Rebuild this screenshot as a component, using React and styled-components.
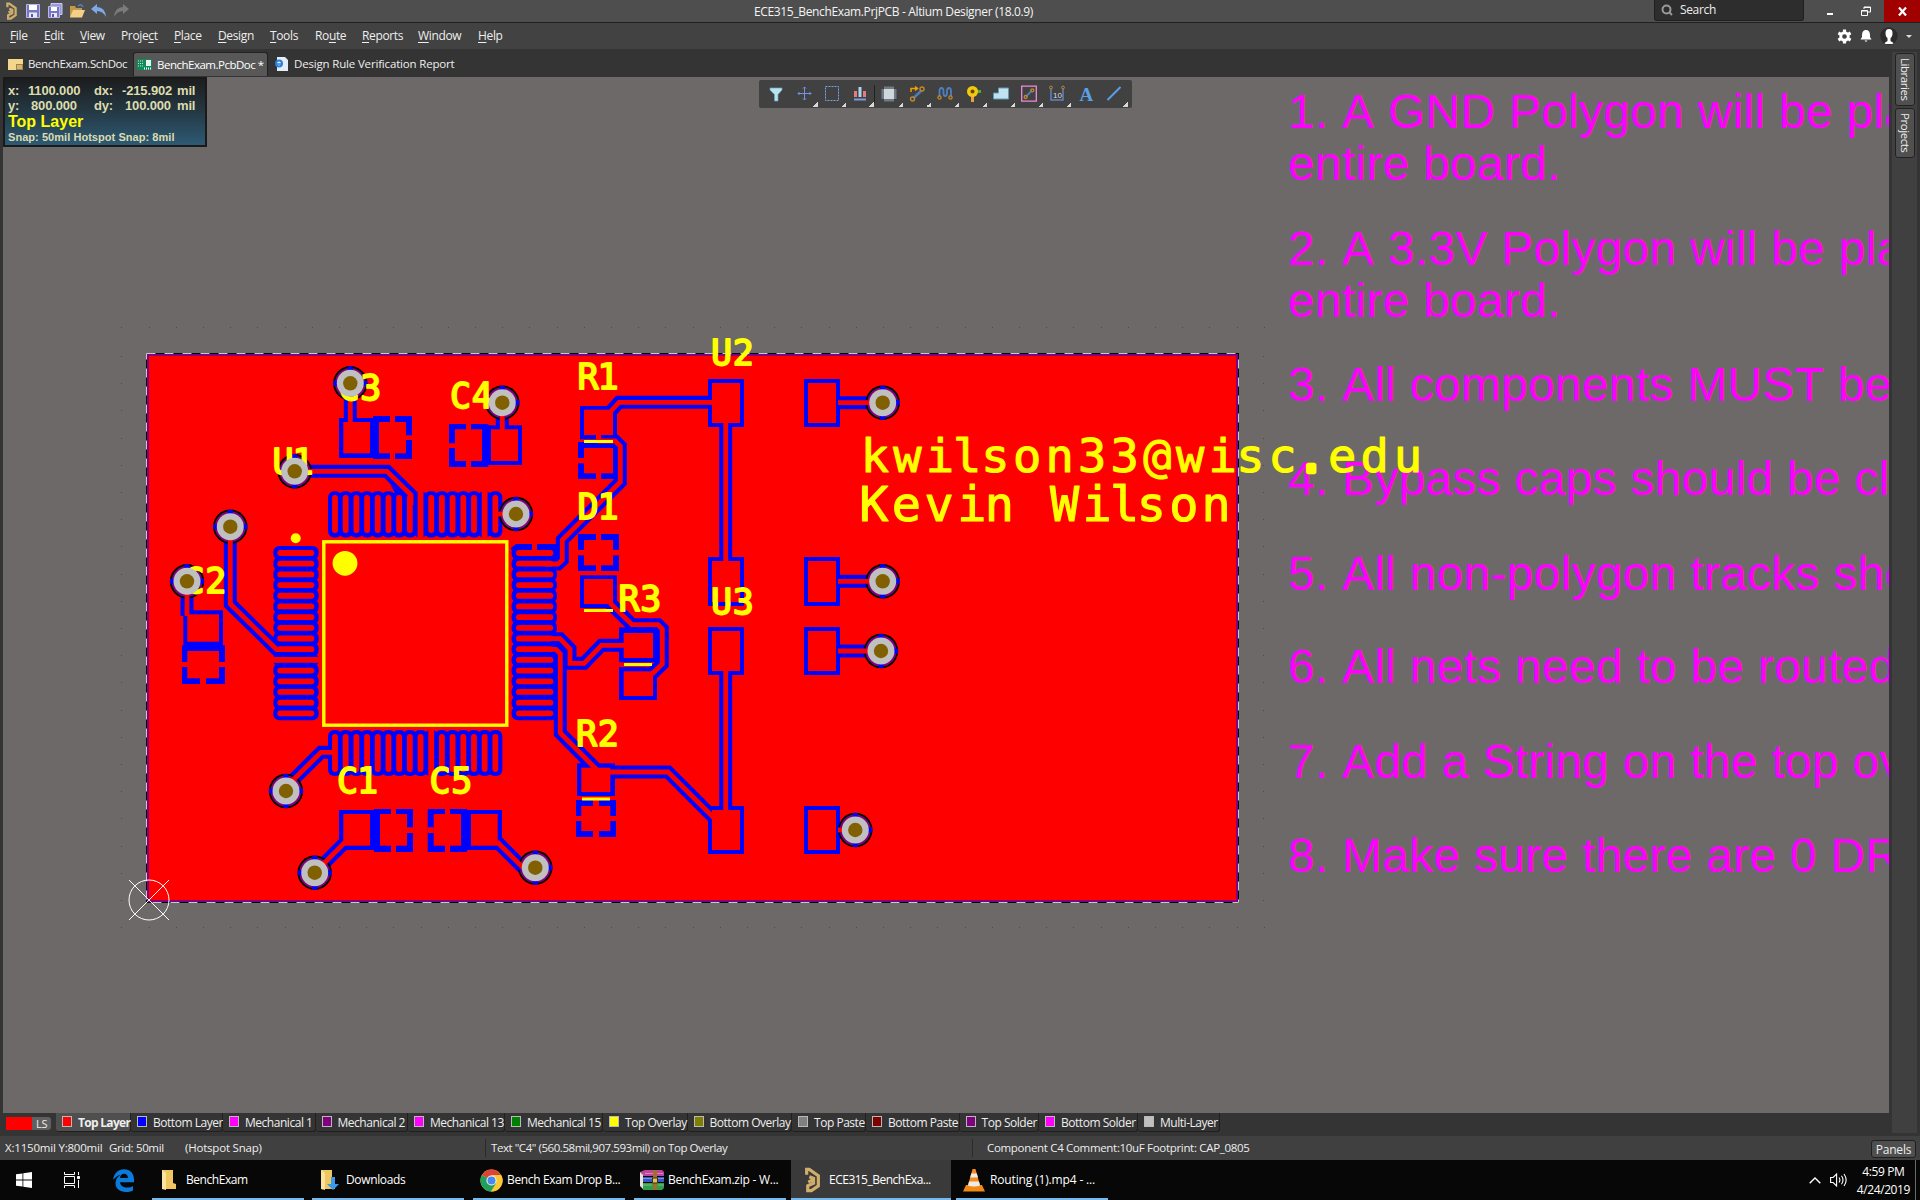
import React from "react";
import styled, { createGlobalStyle, css } from "styled-components";

const Global = createGlobalStyle`
  html, body { margin: 0; padding: 0; background: #343434; }
  * { box-sizing: border-box; }
`;

const ui = css`
  font-family: "Open Sans", "Noto Sans", sans-serif;
  font-size: 12px;
  line-height: 16px;
  letter-spacing: -0.2px;
  color: #eeeeee;
  white-space: pre;
`;

const Screen = styled.div`
  ${ui}
  width: 1920px;
  height: 1200px;
  overflow: hidden;
  display: flex;
  flex-direction: column;
  background: #343434;
`;

/* ---------- title bar ---------- */
const TitleBar = styled.header`
  display: grid;
  grid-template-columns: 754px 1fr auto;
  height: 23px;
  background: #4e4e4e;
  border-bottom: 1px solid #202020;
  flex: none;
`;
const QuickIcons = styled.div`
  display: flex;
  align-items: center;
  padding-left: 4px;
  gap: 6px;
`;
const Title = styled.div`
  padding-top: 4px;
  letter-spacing: -0.35px;
  color: #f4f4f4;
`;
const WindowControls = styled.div`
  display: flex;
  height: 22px;
`;
const SearchBox = styled.div`
  width: 150px;
  height: 21px;
  margin-right: 8px;
  padding: 0 0 0 6px;
  display: flex;
  align-items: center;
  gap: 7px;
  letter-spacing: -0.35px;
  background: #2d2d2d;
  border: 1px solid #1f1f1f;
  border-top: 0;
  border-radius: 0 0 3px 3px;
`;
const WinButton = styled.div`
  width: 36px;
  height: 22px;
  display: flex;
  align-items: center;
  justify-content: center;
  background: ${(p) => (p.$close ? "#a00000" : "transparent")};
`;

/* ---------- menu ---------- */
const MenuBar = styled.nav`
  display: flex;
  align-items: center;
  height: 26px;
  flex: none;
  padding-left: 10px;
  background: #424242;
`;
const MenuItem = styled.div`
  width: ${(p) => p.$w}px;
  letter-spacing: -0.36px;
  u { text-underline-offset: 2px; }
`;
const MenuRight = styled.div`
  margin-left: auto;
  display: flex;
  align-items: center;
  gap: 8px;
  padding-right: 8px;
`;

/* ---------- body ---------- */
const Body = styled.div`
  display: flex;
  height: 1087px;
  flex: none;
`;
const Main = styled.main`
  width: 1892px;
  display: flex;
  flex-direction: column;
`;
const DocTabs = styled.div`
  height: 28px;
  display: flex;
  align-items: flex-end;
  padding-bottom: 1px;
`;
const DocTab = styled.div`
  width: ${(p) => p.$w}px;
  height: 24px;
  display: flex;
  align-items: center;
  gap: ${(p) => p.$gap || 5}px;
  padding-left: ${(p) => p.$pl}px;
  font-size: 11.5px;
  letter-spacing: ${(p) => p.$ls || 0}px;
  border-radius: 3px 3px 0 0;
  svg { flex: none; }
  ${(p) =>
    p.$active &&
    css`
      background: #585858;
      border: 1px solid #222;
      border-bottom: 0;
      color: #fff;
    `}
`;
const Canvas = styled.section`
  position: relative;
  width: 1886px;
  height: 1036px;
  margin-left: 3px;
  background: #6d6968;
  overflow: hidden;
  > svg { display: block; }
`;
const Rail = styled.aside`
  width: 25px;
  height: 1081px;
  margin-top: 3px;
  padding: 1px 2px 0 3px;
  background: #404040;
  display: flex;
  flex-direction: column;
  gap: 2px;
`;
const RailTab = styled.div`
  height: ${(p) => p.$h}px;
  width: 20px;
  display: flex;
  align-items: center;
  justify-content: center;
  writing-mode: vertical-rl;
  font-size: 11.5px;
  letter-spacing: -0.45px;
  background: #505050;
  border: 1px solid #222;
  border-radius: 3px;
`;

/* ---------- overlays on the canvas ---------- */
const Hud = styled.div`
  position: absolute;
  left: 0;
  top: 0;
  width: 204px;
  height: 70px;
  padding: 4px 0 0 3px;
  border: 2px solid #1a1a1a;
  background: linear-gradient(#1c1d1e, #243640 45%, #2d5a75);
  font-family: "Liberation Sans", Arial, sans-serif;
  font-weight: 700;
  color: #dcdcae;
  letter-spacing: 0;
`;
const HudGrid = styled.div`
  display: grid;
  grid-template-columns: 20px 66px 28px 55px 30px;
  font-size: 13px;
  line-height: 15px;
  letter-spacing: -0.15px;
`;
const HudValue = styled.span`
  padding-left: ${(p) => p.$pl || 0}px;
`;
const HudLayer = styled.div`
  font-size: 16px;
  line-height: 17px;
  color: #ffff00;
`;
const HudSnap = styled.div`
  font-size: 11px;
  line-height: 14px;
  letter-spacing: 0.05px;
`;
const Toolbar = styled.div`
  position: absolute;
  left: 756px;
  top: 3px;
  width: 373px;
  height: 28px;
  padding-left: 3px;
  display: flex;
  background: #414141;
  border-radius: 2px;
`;
const Tool = styled.div`
  width: 28.15px;
  height: 28px;
  padding: 6px 0 0 6px;
  ${(p) =>
    p.$menu &&
    css`
      background: linear-gradient(135deg, transparent 50%, #d8d8d8 50%) no-repeat 23px 22px / 5px 5px;
    `}
  svg { display: block; overflow: visible; }
`;

/* ---------- layers and status ---------- */
const LayerBar = styled.div`
  height: 23px;
  display: flex;
  padding-left: 6px;
`;
const LayerSet = styled.div`
  display: flex;
  width: 45px;
  height: 13px;
  margin: 4px 5px 0 0;
  line-height: 13px;
  font-size: 11px;
  background: linear-gradient(90deg, #ff0000 26px, #606060 26px);
  padding-left: 30px;
  border-radius: 0 3px 3px 0;
`;
const LayerTab = styled.div`
  width: ${(p) => p.$w}px;
  height: 19px;
  padding: 1px 0 0 5px;
  display: flex;
  align-items: center;
  gap: 6px;
  border: 1px solid #1f1f1f;
  border-width: 0 1px 1px 0;
  border-radius: 0 0 3px 3px;
  letter-spacing: ${(p) => p.$ls ?? -0.47}px;
  background: ${(p) => (p.$active ? "#4f4f4f" : "#343434")};
  font-weight: ${(p) => (p.$active ? 700 : 400)};
`;
const Swatch = styled.i`
  width: 10px;
  height: 11px;
  margin: 0 0 2px 1px;
  flex: none;
  border: 1px solid #b9b9b9;
  background: ${(p) => p.$c};
`;
const StatusBar = styled.footer`
  height: 24px;
  flex: none;
  display: flex;
  align-items: center;
  padding-left: 5px;
  background: #404040;
`;
const StatusCell = styled.div`
  width: ${(p) => p.$w}px;
  height: 18px;
  line-height: 18px;
  font-size: 11.5px;
  letter-spacing: ${(p) => p.$ls ?? -0.2}px;
  padding-left: ${(p) => p.$pl || 0}px;
  border-left: ${(p) => (p.$sep ? "1px solid #2b2b2b" : "0")};
`;
const PanelsButton = styled.div`
  margin: 2px 4px 0 auto;
  width: 45px;
  height: 18px;
  line-height: 17px;
  text-align: center;
  background: #4f4f4f;
  border: 1px solid #1f1f1f;
  border-radius: 3px;
`;

/* ---------- taskbar ---------- */
const Taskbar = styled.div`
  height: 40px;
  flex: none;
  display: flex;
  background: #070707;
  color: #fff;
`;
const SysButton = styled.div`
  width: 48px;
  height: 40px;
  padding-left: ${(p) => p.$pl || 0}px;
  display: flex;
  align-items: center;
  justify-content: center;
`;
const Task = styled.div`
  width: ${(p) => p.$w || 152}px;
  height: 40px;
  margin-left: ${(p) => p.$ml || 8}px;
  padding: 2px 0 0 ${(p) => p.$pl}px;
  display: flex;
  align-items: center;
  gap: ${(p) => p.$gap}px;
  letter-spacing: ${(p) => p.$ls ?? -0.15}px;
  border-bottom: 2px solid #76b9ed;
  background: ${(p) => (p.$active ? "#3a3a3a" : "transparent")};
  svg { flex: none; }
`;
const Tray = styled.div`
  margin-left: auto;
  display: flex;
  align-items: center;
  gap: 9px;
  padding-right: 4px;
`;
const Clock = styled.div`
  text-align: center;
  line-height: 18px;
  height: 36px;
  margin: 1px -2px 0 0;
  letter-spacing: -0.4px;
`;
const ShowDesktop = styled.div`
  width: 1px;
  height: 40px;
  margin-left: -2px;
  background: #6a6a6a;
`;

/* ---------- board data ---------- */
const RED = "#ff0000";
const BLUE = "#0000ff";
const YEL = "#ffff00";
const PITCH = 10.69;

const vias = [
  [350.3, 383.3], [502.3, 402.7], [294.7, 471.3], [516, 514], [230.3, 526.7], [187, 581.3],
  [286, 791], [314.7, 872.7], [535.3, 867.7], [882.7, 402.7], [882.7, 581.3], [881, 651], [855.3, 830],
];

// x1, y1, x2, y2 of the clearance and then of the copper
const pads = [
  [339, 418, 376, 458, 343.3, 422, 370, 453.3],
  [487, 425.3, 522, 465, 491, 429.3, 518, 461],
  [183.3, 610.3, 223, 646, 187.3, 614.3, 219, 641.7],
  [339, 810, 375, 850, 343.3, 814, 370, 845.7],
  [466, 810, 502, 850, 471, 814, 497.7, 845.7],
  [580, 406, 617, 439.3, 584, 409.7, 613, 435],
  [580, 575.3, 617, 608, 584, 579, 613, 604],
  [619, 627.3, 657, 662.3, 623.7, 633, 653, 658],
  [619, 667, 657, 700, 623.7, 671.3, 653, 696],
  [577, 763.3, 615, 796, 581.3, 767.7, 610.3, 792],
];
for (const x of [708, 804]) {
  for (const [a, b] of [[379, 427], [557, 606], [627, 675], [806, 854]]) {
    pads.push([x, a, x + 36, b, x + 4, a + 4, x + 32, b - 4]);
  }
}

// relief pads: clearance, copper, then spokes cut through the clearance
const reliefs = [
  { o: [373, 416, 412, 459], i: [379, 422, 406, 453.3], g: [[390, 416, 5, 6], [390, 453, 5, 6], [406, 435.3, 6, 4.7]] },
  { o: [449, 424, 488.3, 467], i: [455, 429.3, 482, 461], g: [[466, 424, 5, 6], [466, 461, 5, 6], [449, 443.3, 6, 4.7]] },
  { o: [182, 645.3, 225, 684], i: [187.3, 651, 219, 678.3], g: [[182, 662, 6, 5], [219, 662, 6, 5], [200, 678, 6, 6]] },
  { o: [374, 809, 413, 852], i: [380, 814, 407, 845.7], g: [[391, 809, 5, 5], [391, 845, 5, 7], [407, 827.3, 6, 5.7]] },
  { o: [427.7, 809, 467, 852], i: [433.7, 814, 461, 845.7], g: [[445, 809, 5, 5], [445, 845, 5, 7], [427.5, 827.3, 6.3, 5.7]] },
  { o: [578, 442, 617, 479], i: [584, 448, 613, 473.3], g: [[578, 458, 6, 5.3], [596, 473, 5, 6]] },
  { o: [578, 534, 619, 571], i: [584, 540, 613, 565.3], g: [[596, 534, 5, 6], [596, 565, 5, 6], [578, 550, 6, 5.3], [613, 550, 6, 5.3]] },
  { o: [576, 800, 616, 837], i: [581.3, 806, 610.3, 831], g: [[593, 800, 6, 6], [593, 831, 6, 6], [576, 816, 6, 5], [610, 816, 6, 5]] },
];

const tracks = [
  "350.3,383 350.3,424",
  "502.3,402 502.3,431",
  "187,581 187,616",
  "294.7,471.3 387,471.3 411,495 411,505",
  "230.3,526.7 230.3,604 276.7,649.5 285,649.5",
  "286,791 286,787 321,752.3 336,752.3",
  "314.7,872.7 345,842.3",
  "535.3,867.7 523,867.7 497,841.7",
  "611,411 619,402.3 715,402.3",
  "598,441 615,441 620.3,446 620.3,482 562.3,540 562.3,560 558,564 545,564",
  "610,603 632,624.7 658,624.7 662.3,629 662.3,664 652,674",
  "545,638.7 560,638.7 570,649 570,663.3 584,663.3 601.5,645.3 625,645.3",
  "545,649.3 556,649.3 560.3,654 560.3,733 597,770",
  "608,772 668,772 714,818",
  "725.7,422 725.7,562",
  "725.7,670 725.7,811",
  "838,402.7 882,402.7",
  "838,581.3 882,581.3",
  "838,651 881,651",
  "838,830 855,830",
];

const rows = Array.from({ length: 16 }, (_, i) => i);

function Pins({ red }) {
  const out = [];
  const push = (key, x, y, w, h, r) =>
    out.push(<rect key={key} x={x} y={y} width={w} height={h} rx={r} fill={red ? RED : BLUE} />);
  rows.forEach((i) => {
    const cx = 335 + i * PITCH;
    const cy = 553 + i * PITCH;
    const t = i === 8 || i === 14;
    const b = i === 9;
    const l = i === 10;
    if (red) {
      push(`t${i}`, cx - 2.9, t ? 490 : 495, 5.8, t ? 48.5 : 38, t ? 0 : 2.9);
      push(`b${i}`, cx - 2.9, b ? 729 : 734, 5.8, b ? 48 : 38, b ? 0 : 2.9);
      push(`l${i}`, l ? 272 : 277.3, cy - 2.9, l ? 48.5 : 37, 5.8, l ? 0 : 2.9);
      push(`r${i}`, 516, cy - 2.9, 37.3, 5.8, 2.9);
    } else {
      push(`t${i}`, cx - 7, 491.3, 14, 46.2, 6);
      push(`b${i}`, cx - 7, 730, 14, 46, 6);
      push(`l${i}`, 273.3, cy - 7, 45.4, 14, 6);
      push(`r${i}`, 511.6, cy - 7, 45.4, 14, 6);
    }
  });
  return out;
}

const ViaRing = ({ c: [x, y] }) => (
  <g>
    <circle cx={x} cy={y} r="17.2" fill="#000" />
    <circle cx={x} cy={y} r="15.4" fill="#800080" />
    <path d={`M${x - 2.5} ${y - 17}h5v34h-5zM${x - 17} ${y - 2.5}h34v5h-34z`} fill={BLUE} />
  </g>
);
const ViaCore = ({ c: [x, y] }) => (
  <g>
    <circle cx={x} cy={y} r="13.5" fill="#c0c0c0" />
    <circle cx={x} cy={y} r="7.2" fill="#806000" />
  </g>
);

const designators = [
  ["C3", 338.5, 401], ["C4", 450, 408.7], ["U1", 272.5, 475], ["C2", 183.5, 593.7],
  ["C1", 337, 793.7], ["C5", 429.5, 793.7], ["R1", 577.5, 389.5], ["D1", 577.5, 519.5],
  ["U2", 711, 365.7], ["R3", 618.5, 611.7], ["U3", 711, 614.5], ["R2", 576, 746.5],
];

const notes = [
  ["1. A GND Polygon will be pla", 128], ["entire board.", 180],
  ["2. A 3.3V Polygon will be pla", 265], ["entire board.", 317],
  ["3. All components MUST be", 401.3], ["4. Bypass caps should be cl", 495.3],
  ["5. All non-polygon tracks sho", 589.5], ["6. All nets need to be routed", 683],
  ["7. Add a String on the top ov", 778.3], ["8. Make sure there are 0 DR", 872.3],
];

const SilkText = styled.text`
  font-family: "DejaVu Sans Mono", monospace;
  font-size: ${(p) => p.$size}px;
  letter-spacing: 0;
  fill: #ffff00;
  stroke: #ffff00;
  stroke-width: ${(p) => p.$sw}px;
  stroke-linejoin: round;
`;
const SilkDot = styled.tspan`
  stroke-width: 4.5px;
`;
const NoteText = styled.text`
  font-family: "Liberation Sans", Arial, sans-serif;
  font-size: 48px;
  font-kerning: none;
  letter-spacing: 0.25px;
  fill: #ff00ff;
`;

const glyphX = (list, shift) => list.map((v) => (840 + v / 2.613 - shift).toFixed(1)).join(" ");
const mailX = glyphX([62, 147, 232, 303, 377, 460, 545, 630, 715, 800, 886, 971, 1043, 1127, 1202, 1283, 1368, 1455], 3);
const nameX = glyphX([57, 142, 227, 313, 385, 470, 555, 640, 712, 782, 867, 951], 2.5);

function Board() {
  const dots = [];
  for (let i = -1; i <= 41; i++) {
    const x = Math.round(148.6 + i * 27.2);
    dots.push([x, 327], [x, 927]);
  }
  for (let i = 0; i <= 20; i++) {
    const y = Math.round(356 + i * 27.2);
    dots.push([121, y], [1263, y]);
  }
  return (
    <svg width="1886" height="1036" viewBox="3 77 1886 1036">
      {dots.map(([x, y], i) => (
        <rect key={i} x={x} y={y} width="1" height="1" fill="#4b4949" />
      ))}
      {notes.map(([t, y]) => (
        <NoteText key={y} x="1288" y={y}>{t}</NoteText>
      ))}
      <rect x="146.5" y="353.5" width="1092" height="549" fill="none" stroke="#000" />
      <rect x="146.5" y="353.5" width="1092" height="549" fill="none" stroke="#c9c9c9" strokeDasharray="9 9" />
      <rect x="147" y="354" width="1091" height="548" fill="#800080" />
      <rect x="149" y="356" width="1087" height="544" fill={RED} />
      <g fill={BLUE}>
        {pads.map((p, i) => <rect key={i} x={p[0]} y={p[1]} width={p[2] - p[0]} height={p[3] - p[1]} />)}
        <Pins />
        <path d="M511 548l5-4h16v6h-21zM537 544h19v6h-19z" />
        <path d="M390 484l12 11h-6z" />
      </g>
      <g fill="none" stroke={BLUE} strokeWidth="13">
        {tracks.map((t) => <polyline key={t} points={t} />)}
      </g>
      {reliefs.map((r, i) => (
        <g key={i}>
          <rect x={r.o[0]} y={r.o[1]} width={r.o[2] - r.o[0]} height={r.o[3] - r.o[1]} fill={BLUE} />
          <g fill={RED}>
            <rect x={r.i[0]} y={r.i[1]} width={r.i[2] - r.i[0]} height={r.i[3] - r.i[1]} />
            {r.g.map((g, k) => <rect key={k} x={g[0]} y={g[1]} width={g[2]} height={g[3]} />)}
          </g>
        </g>
      ))}
      {vias.map((c, i) => <ViaRing key={i} c={c} />)}
      <g fill={RED}>
        {pads.map((p, i) => <rect key={i} x={p[4]} y={p[5]} width={p[6] - p[4]} height={p[7] - p[5]} />)}
        <Pins red />
        <rect x="596" y="434" width="5" height="8" />
        <rect x="532" y="543" width="5" height="8" />
      </g>
      <g fill="none" stroke={RED} strokeWidth="4.8">
        {tracks.map((t) => <polyline key={t} points={t} />)}
        <path d="M496 514h10" />
      </g>
      <rect x="323.8" y="541.8" width="183" height="183.4" fill="none" stroke={YEL} strokeWidth="3.4" />
      <circle cx="345" cy="563.3" r="12.4" fill={YEL} />
      <circle cx="295.7" cy="538.3" r="5" fill={YEL} />
      <path d="M584 441.5h29M584 610.5h29M624 664.5h28M582 799h28" stroke={YEL} strokeWidth="3" />
      {designators.map(([t, x, y]) => (
        <SilkText key={t} $size={35} $sw={1.8} x={`${x} ${x + (t[1] === "1" ? 20 : 21.8)}`} y={y - 1}>{t}</SilkText>
      ))}
      <SilkText $size={47} $sw={1.1} x={mailX} y={471.8}>
        kwilson33@wisc<SilkDot>.</SilkDot>edu
      </SilkText>
      <SilkText $size={48.5} $sw={1.1} x={nameX} y={520.5}>Kevin Wilson</SilkText>
      {vias.map((c, i) => <ViaCore key={i} c={c} />)}
      <g fill="none" stroke="#fff" strokeWidth="1">
        <circle cx="149" cy="900" r="20" />
        <path d="M129 880l40 40M169 880l-40 40" />
      </g>
    </svg>
  );
}

/* ---------- icons ---------- */
const AltiumMark = ({ w = 12, h = 16 }) => (
  <svg width={w} height={h} viewBox="0 0 16 24" fill="none" stroke="#cfae6c" strokeWidth="3">
    <path d="M2.500 7V2h2.500l8.500 6v9.500L7 22H3.500v-4.500l5.500-2.500v-4.500L5 9" />
    <path d="M9 11.500L4 14" />
  </svg>
);
const Floppy = ({ all }) => (
  <svg width="16" height="16" viewBox="0 0 16 16">
    {all && <path d="M4 .5h11v11H4z" fill="#9a9ad8" stroke="#c9c9f0" />}
    <path d={all ? "M1.500 3.500h11v11h-11z" : "M1.500 1.500h13v13h-13z"} fill="#7676c4" stroke="#b7b7ea" />
    <path d={all ? "M4 4h6v4H4z" : "M4 2h8v5H4z"} fill="#fff" />
    <path d={all ? "M4 10h6v4H4z" : "M4 9.500h8v5H4z"} fill="#e8e8fa" />
    <path d={all ? "M5 11h2v3H5z" : "M6 11h2v3H6z"} fill="#5757a8" />
  </svg>
);
const OpenFolder = () => (
  <svg width="16" height="16" viewBox="0 0 16 16">
    <path d="M1 3h5l1 2h6v9H1z" fill="#c39a4a" />
    <path d="M4 7h12l-3 7.500H1z" fill="#f3cf87" />
    <path d="M9 3q3-3 5 1" stroke="#4f83c8" fill="none" strokeWidth="1.500" />
  </svg>
);
const Undo = ({ c, flip }) => (
  <svg width="16" height="16" viewBox="0 0 16 16">
    <g transform={flip ? "matrix(-1 0 0 1 16 0)" : undefined}>
      <path d="M0 6l6-5v3q8 0 9 10-3-6-9-6v3z" fill={c} />
    </g>
  </svg>
);

const toolIcons = [
  { s: <path d="M2 2h12v2L10 8.500V15H6.500V8.500L2 4z" fill="#b9e2ee" stroke="#6fa3b8" strokeWidth=".7" /> },
  { m: 1, s: <path d="M8.500 1v13M2 7.500h13M7 2.500l1.500-1.500 1.500 1.500M7 12.500l1.500 1.500 1.500-1.500M3.500 6l-1.500 1.500 1.500 1.500M13.500 6l1.500 1.500-1.500 1.500" stroke="#7392e6" fill="none" /> },
  { m: 1, s: <path d="M1.500.5h13v14h-13z" stroke="#7d9ff0" fill="none" strokeDasharray="2 1" /> },
  { m: 1, s: <g><path d="M2 5h3v6H2zM11 5h3v6h-3z" fill="#e87a7a" /><path d="M6.500 1h3v10h-3z" fill="#a7d8ea" /><path d="M2 12.500h12v2H2z" fill="#7f9be0" /><path d="M22.500-1v18" stroke="#222" /></g> },
  { m: 1, s: <g><path d="M.5 4h15M.5 6h15M.5 8h15M.5 10h15M.5 12h15M4 .5v15M6 .5v15M8 .5v15M10 .5v15M12 .5v15" stroke="#a9c3d2" strokeWidth=".9" /><path d="M3 3h10v10H3z" fill="#cfd8dc" /></g> },
  { m: 1, s: <g fill="none"><path d="M4.500 12L12 5" stroke="#4e7bc0" strokeWidth="2.500" /><circle cx="3.500" cy="13" r="2" stroke="#c08a2a" strokeWidth="1.400" /><circle cx="13" cy="3" r="2" stroke="#c08a2a" strokeWidth="1.400" /><path d="M2 6V2.500h6M6 .5l2.500 2L6 4.500" stroke="#f0a000" strokeWidth="1.500" /></g> },
  { m: 1, s: <g fill="none"><path d="M2.500 10V5q0-3 2-3t2 3v2q0 3 1.700 3T10 7V5q0-3 2-3t2 3v5" stroke="#4f7fc0" strokeWidth="1.800" /><circle cx="2.500" cy="11.500" r="1.600" stroke="#c08a2a" strokeWidth="1.300" /><circle cx="13.500" cy="11.500" r="1.600" stroke="#c08a2a" strokeWidth="1.300" /></g> },
  { m: 1, s: <g><path d="M9 4h7v3H9z" fill="#4fae2f" /><path d="M6 9h3v7H6z" fill="#e8a040" /><circle cx="7.500" cy="5.500" r="5.500" fill="#f2c90c" /><circle cx="7.500" cy="5.500" r="2" fill="#5c4a10" /></g> },
  { m: 1, s: <path d="M.5 7h5V2h10v11H.5z" fill="#c0e2ee" stroke="#5f9ab5" /> },
  { m: 1, s: <g fill="none"><path d="M.7.2h14.600v15H.7z" stroke="#f08ad8" strokeWidth="1.300" /><path d="M5 10.500l6-6" stroke="#4e7bc0" strokeWidth="1.800" /><circle cx="4.700" cy="11" r="1.500" stroke="#c08a2a" strokeWidth="1.300" /><circle cx="11.300" cy="4.300" r="1.500" stroke="#c08a2a" strokeWidth="1.300" /></g> },
  { m: 1, s: <g><path d="M2 3v11h12V3" stroke="#5f84c0" fill="none" strokeWidth="1.500" /><circle cx="2" cy="1.500" r="1.400" fill="none" stroke="#c08a2a" /><circle cx="14" cy="1.500" r="1.400" fill="none" stroke="#c08a2a" /><text x="4" y="11.500" fontSize="8" letterSpacing="0" fill="#ddd" fontFamily="Liberation Sans">10</text></g> },
  { s: <text x="1.500" y="14.500" fontSize="19" fontWeight="700" fill="#5b9fe8" fontFamily="Liberation Serif">A</text> },
  { m: 1, s: <path d="M1.500 14L14.500 1" stroke="#5b9fe8" strokeWidth="2" /> },
];

const layers = [
  ["Top Layer", 75, "#ff0000", -0.7], ["Bottom Layer", 92, "#0000ff"], ["Mechanical 1", 92.5, "#ff00ff"],
  ["Mechanical 2", 92.5, "#800080"], ["Mechanical 13", 97, "#ff00ff"], ["Mechanical 15", 98, "#008000"],
  ["Top Overlay", 84.5, "#ffff00"], ["Bottom Overlay", 104.5, "#808000"], ["Top Paste", 74, "#808080"],
  ["Bottom Paste", 93.5, "#800000"], ["Top Solder", 79.5, "#800080"], ["Bottom Solder", 99, "#ff00ff"],
  ["Multi-Layer", 82, "#c0c0c0"],
];

const menus = [
  ["", "F", "ile", 34], ["", "E", "dit", 36], ["", "V", "iew", 41], ["Proje", "c", "t", 53], ["", "P", "lace", 44],
  ["", "D", "esign", 52], ["", "T", "ools", 45], ["Ro", "u", "te", 47], ["", "R", "eports", 56], ["", "W", "indow", 60], ["", "H", "elp", 40],
];

const Folder = ({ dl }) => (
  <svg width={dl ? 18 : 14} height="22" viewBox={dl ? "0 0 18 22" : "0 0 14 22"}>
    <path d="M0 1h11v13l3 1v5H0z" fill="#f0c660" />
    <path d="M0 1l4 3v17l-4-1z" fill="#fbe3a0" />
    {dl && <path d="M10 8h4v7h4l-6 6-6-6h4z" fill="#3b9ae8" />}
  </svg>
);
const Chrome = () => (
  <svg width="23" height="23" viewBox="0 0 24 24">
    <circle cx="12" cy="12" r="11.500" fill="#fbc934" />
    <path d="M12 12L2 6.300A11.500 11.500 0 0 1 22 6.300H12z" fill="#dc4437" />
    <path d="M12 12L2 6.300A11.500 11.500 0 0 0 11.500 23.500L17 15z" fill="#1fa15d" />
    <path d="M12 6.500h10.200A11.500 11.500 0 0 1 11.500 23.500L17 14.500z" fill="#fbc934" />
    <circle cx="12" cy="12" r="5.300" fill="#f5f5f5" />
    <circle cx="12" cy="12" r="4.200" fill="#4a88ee" />
  </svg>
);
const Rar = () => (
  <svg width="24" height="20" viewBox="0 0 24 20">
    <path d="M0 2l5-2h17l2 2v4H3z" fill="#c0459a" />
    <path d="M2 7h22v5H2z" fill="#3a56c8" />
    <path d="M2 13h22v5l-2 2H3z" fill="#2fa04a" />
    <path d="M0 2l3 3v14l-3-3z" fill="#e6e2d8" />
    <path d="M13 0h4v20h-4z" fill="#a0702a" />
    <path d="M12.500 8h5v5h-5z" fill="#e0c060" stroke="#403010" />
    <path d="M3 8.500h9M18 8.500h6M3 15h9M18 15h6M5 3.500h8M17 3.500h6" stroke="#fff" strokeOpacity=".35" />
  </svg>
);
const Vlc = () => (
  <svg width="22" height="24" viewBox="0 0 22 24">
    <path d="M3 17h16l3 6.500H0z" fill="#f08a10" />
    <path d="M9.500 1h3l5 18q-6.500 3-13 0z" fill="#f58a1a" />
    <path d="M8.300 5.500h5.500l1.200 4H7.200zM6 13.500h10l1 4q-6 2-12 0z" fill="#ececec" />
  </svg>
);
const Edge = () => (
  <svg width="21" height="23" viewBox="0 0 21 23">
    <path d="M0 11C1 4 5.500.3 11 .3c6.500 0 10 4.700 10 10.200v2.800H7c.3 3.600 3.500 5.200 7 5.200 2.300 0 4.400-.6 6-1.600v4.600c-2 1-4.500 1.500-7 1.500C6.500 23 2.500 19.500 2.500 14c0-3.500 2-6.500 5-8C4.500 6.500 2 8.300 0 11zm7-2h8c0-2.500-1.500-4.300-4-4.300S7.300 6.600 7 9z" fill="#0a7bdc" />
  </svg>
);

export default function App() {
  return (
    <Screen>
      <Global />
      <TitleBar>
        <QuickIcons>
          <AltiumMark w={15} h={18} />
          <Floppy />
          <Floppy all />
          <OpenFolder />
          <Undo c="#7fa9e6" />
          <Undo c="#7b7b7b" flip />
        </QuickIcons>
        <Title>ECE315_BenchExam.PrjPCB - Altium Designer (18.0.9)</Title>
        <WindowControls>
          <SearchBox>
            <svg width="12" height="12" viewBox="0 0 12 12" fill="none" stroke="#9a9a9a" strokeWidth="2">
              <circle cx="5.500" cy="5.500" r="4" />
              <path d="M8 8l3 3" />
            </svg>
            Search
          </SearchBox>
          <WinButton>
            <svg width="8" height="10"><path d="M1 7h6v2H1z" fill="#fff" /></svg>
          </WinButton>
          <WinButton>
            <svg width="10" height="10" viewBox="0 0 10 10" fill="none" stroke="#fff">
              <path d="M3 3V1h6.500v5H7M.5 4.500h6v5h-6zM3 1.500h6M.5 5h6" />
            </svg>
          </WinButton>
          <WinButton $close>
            <svg width="9" height="9" viewBox="0 0 9 9" stroke="#fff" strokeWidth="2.200"><path d="M1 .5l7 8M8 .5l-7 8" /></svg>
          </WinButton>
        </WindowControls>
      </TitleBar>
      <MenuBar>
        {menus.map(([a, u, b, w]) => (
          <MenuItem key={a + u + b} $w={w}>{a}<u>{u}</u>{b}</MenuItem>
        ))}
        <MenuRight>
          <svg width="15" height="15" viewBox="-8 -8 16 16">
            <circle r="4" fill="none" stroke="#fff" strokeWidth="3" />
            {[0, 60, 120].map((a) => (
              <path key={a} d="M-1.700-7.500h3.400v3h-3.400zM-1.700 4.500h3.400v3h-3.400z" fill="#fff" transform={`rotate(${a})`} />
            ))}
          </svg>
          <svg width="12" height="14" viewBox="0 0 12 14" fill="#fff">
            <path d="M5 1h2q3 1 3 5v2l1.500 2.500H.5L2 8V6q0-4 3-5zM4.500 11.500h3L6 13z" />
          </svg>
          <svg width="18" height="18" viewBox="0 0 18 18">
            <circle cx="9" cy="9" r="8.700" fill="#2c2c2c" />
            <path d="M9 2q3.500 0 3.500 4T10.500 11v3l3 2-1 1H5.500l-1-1 3-2v-3q-2-1-2-5T9 2z" fill="#fff" />
          </svg>
          <svg width="6" height="3"><path d="M0 0h6L3 3z" fill="#ddd" /></svg>
        </MenuRight>
      </MenuBar>
      <Body>
        <Main>
          <DocTabs>
            <DocTab $w={133} $pl={8} $ls={-0.4}>
              <svg width="15" height="11" viewBox="0 0 15 11">
                <path d="M0 0h15v11H0z" fill="#f2d68c" />
                <path d="M8 5h7v6H8z" fill="#a58240" />
                <path d="M9 7h5M9 9h5" stroke="#f8e8b8" />
              </svg>
              BenchExam.SchDoc
            </DocTab>
            <DocTab $active $w={135} $pl={3} $ls={-0.5}>
              <svg width="15" height="11" viewBox="0 0 15 11">
                <path d="M0 0h15v11H0z" fill="#0f8a5a" />
                <path d="M1 2h5M1 4.500h5M1 7h5" stroke="#bfe8d0" strokeDasharray="1 1" />
                <path d="M9 1h5v6H9z" fill="#e8f4ec" />
                <path d="M7 9.500h7" stroke="#fff" strokeWidth="2" strokeDasharray="1 1" />
              </svg>
              BenchExam.PcbDoc *
            </DocTab>
            <DocTab $w={200} $pl={7} $gap={6} $ls={-0.17}>
              <svg width="13" height="14" viewBox="0 0 13 14">
                <path d="M2 0h8l3 3v11H2z" fill="#e4eefa" />
                <circle cx="4" cy="6.500" r="3" fill="none" stroke="#2a7fd8" strokeWidth="2" />
                <path d="M1 7h6" stroke="#2a7fd8" strokeWidth="1.500" />
              </svg>
              Design Rule Verification Report
            </DocTab>
          </DocTabs>
          <Canvas>
            <Board />
            <Hud>
              <HudGrid>
                <span>x:</span><HudValue>1100.000</HudValue><span>dx:</span><HudValue>-215.902</HudValue><span>mil</span>
                <span>y:</span><HudValue $pl={3}>800.000</HudValue><span>dy:</span><HudValue $pl={3}>100.000</HudValue><span>mil</span>
              </HudGrid>
              <HudLayer>Top Layer</HudLayer>
              <HudSnap>Snap: 50mil Hotspot Snap: 8mil</HudSnap>
            </Hud>
            <Toolbar>
              {toolIcons.map((t, i) => (
                <Tool key={i} $menu={t.m}>
                  <svg width="16" height="16" viewBox="0 0 16 16">{t.s}</svg>
                </Tool>
              ))}
            </Toolbar>
          </Canvas>
          <LayerBar>
            <LayerSet>LS</LayerSet>
            {layers.map(([name, w, c, ls], i) => (
              <LayerTab key={name} $w={w} $active={i === 0} $ls={ls}>
                <Swatch $c={c} />
                {name}
              </LayerTab>
            ))}
          </LayerBar>
        </Main>
        <Rail>
          <RailTab $h={53}>Libraries</RailTab>
          <RailTab $h={50}>Projects</RailTab>
        </Rail>
      </Body>
      <StatusBar>
        <StatusCell $w={104}>X:1150mil Y:800mil</StatusCell>
        <StatusCell $w={76} $ls={-0.35}>Grid: 50mil</StatusCell>
        <StatusCell $w={300}>(Hotspot Snap)</StatusCell>
        <StatusCell $w={487} $sep $pl={5} $ls={-0.44}>Text "C4" (560.58mil,907.593mil) on Top Overlay</StatusCell>
        <StatusCell $w={400} $sep $pl={14} $ls={-0.32}>Component C4 Comment:10uF Footprint: CAP_0805</StatusCell>
        <PanelsButton>Panels</PanelsButton>
      </StatusBar>
      <Taskbar>
        <SysButton>
          <svg width="16" height="16" viewBox="0 0 16 16" fill="#fff">
            <path d="M0 2.300l6.500-.9v6.200H0zM7.300 1.300L16 0v7.600H7.300zM0 8.400h6.500v6.200L0 13.700zM7.300 8.400H16V16l-8.700-1.300z" />
          </svg>
        </SysButton>
        <SysButton>
          <svg width="16" height="16" viewBox="0 0 16 16" fill="none" stroke="#fff">
            <path d="M.5 0v2.500h10V0M.5 16v-2.500h10V16M.5 4.500h10v7H.5zM14.500 0v3M14.500 8v8" />
            <path d="M13.500 4.500h2v2h-2z" fill="#fff" />
          </svg>
        </SysButton>
        <SysButton $pl={6}><Edge /></SysButton>
        <Task $pl={10} $gap={10} $ls={-0.45}><Folder />BenchExam</Task>
        <Task $pl={9} $gap={7} $ls={-0.35}><Folder dl />Downloads</Task>
        <Task $pl={7} $gap={4} $ml={9} $ls={-0.35}><Chrome />Bench Exam Drop B...</Task>
        <Task $pl={6} $gap={4} $ml={9} $ls={-0.25}><Rar />BenchExam.zip - W...</Task>
        <Task $pl={13} $gap={8} $ml={5} $w={160} $ls={-0.5} $active><AltiumMark w={17} h={26} />ECE315_BenchExa...</Task>
        <Task $pl={7} $gap={5} $ml={5}><Vlc />Routing (1).mp4 - ...</Task>
        <Tray>
          <svg width="12" height="7" viewBox="0 0 12 7" fill="none" stroke="#fff" strokeWidth="1.400"><path d="M.7 6.300L6 1l5.300 5.300" /></svg>
          <svg width="18" height="14" viewBox="0 0 18 14" fill="none" stroke="#fff" strokeWidth="1.100">
            <path d="M.6 4.500h2.500l3.500-3.500v12L3.100 9.500H.6zM9 4.500q1.800 2.500 0 5M11.500 2.700q3 4.300 0 8.600M14 1q4.300 6 0 12" />
          </svg>
          <Clock>4:59 PM<br />4/24/2019</Clock>
          <ShowDesktop />
        </Tray>
      </Taskbar>
    </Screen>
  );
}
